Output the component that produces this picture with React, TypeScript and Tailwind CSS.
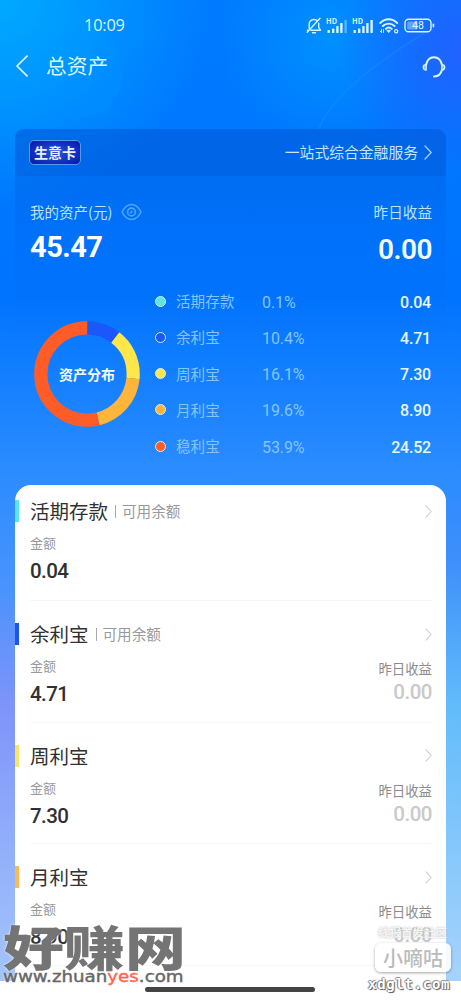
const shares = [
  { name: "活期存款", percent: 0.1, amount: "0.04", color: "#5ce6e0" },
  { name: "余利宝", percent: 10.4, amount: "4.71", color: "#1b57fa" },
  { name: "周利宝", percent: 16.1, amount: "7.30", color: "#ffe64a" },
  { name: "月利宝", percent: 19.6, amount: "8.90", color: "#ffb43a" },
  { name: "稳利宝", percent: 53.9, amount: "24.52", color: "#ff5c28" },
];

const products = [
  { name: "活期存款", note: "可用余额", amount: "0.04", income: null, color: "#5ce6ec" },
  { name: "余利宝", note: "可用余额", amount: "4.71", income: "0.00", color: "#1b55f0" },
  { name: "周利宝", note: null, amount: "7.30", income: "0.00", color: "#f9e668" },
  { name: "月利宝", note: null, amount: "8.90", income: "0.00", color: "#f9b955" },
];

function Chevron({ className }: { className: string }) {
  return (
    <svg className={className} viewBox="0 0 8 15" fill="none" stroke="currentColor" strokeWidth="1.2" strokeLinecap="round" strokeLinejoin="round">
      <path d="m1 1 6.2 6.5L1 14" />
    </svg>
  );
}

function Signal({ last }: { last: string }) {
  return (
    <svg width="22" height="18" viewBox="0 0 22 18" fill="#d8f6ff">
      <text x="0" y="6.5" fontSize="7" fontWeight="700" textLength="11" lengthAdjust="spacingAndGlyphs">HD</text>
      <rect x="1.5" y="13" width="2.4" height="3" rx="0.6" />
      <rect x="6" y="11.5" width="2.4" height="4.5" rx="0.6" />
      <rect x="10.2" y="9" width="2.4" height="7" rx="0.6" />
      <rect x="14.2" y="6" width="2.4" height="10" rx="0.6" />
      <rect x="18.4" y="3" width="2.4" height="13" rx="0.6" opacity={last} />
    </svg>
  );
}

function StatusBar() {
  return (
    <div className="flex h-[50px] items-center pt-[1px] pr-[26px] pl-[84px] text-[#d8f6ff]">
      <span className="font-['Open_Sans'] text-[16.4px] font-medium tracking-[-0.2px]">10:09</span>
      <div className="ml-auto flex items-center">
        <svg width="16" height="17" viewBox="0 0 16 17" fill="none" stroke="currentColor" strokeWidth="1.4" strokeLinecap="round" strokeLinejoin="round">
          <path d="M3.2 11.2V7.2C3.2 4.4 5.2 2.5 8 2.5c1.4 0 2.6.5 3.4 1.3M12.7 6.2v4.2l1.8 2.8H4.8" />
          <path d="M14 1.2 1.2 15.2M1.5 13.2h1M6.5 15.8h3" />
        </svg>
        <div className="ml-[4px] flex gap-[4px]">
          <Signal last="0.4" />
          <Signal last="1" />
        </div>
        <svg className="ml-[5px]" width="20" height="17" viewBox="0 0 20 17" fill="none" stroke="currentColor" strokeWidth="1.8" strokeLinecap="round">
          <path d="M1.2 6C6.2 1 13.2 1 18.2 6M3.8 9c3.4-3.3 8.4-3.3 11.8 0M6.8 11.8c1.8-1.6 4.2-1.6 6 0" />
          <path d="m8 13.6 1.7 2 1.7-2z" fill="currentColor" strokeWidth="0.8" />
          <path d="M2.5 12.5v3M1.3 14.3l1.2 1.2M4.5 15.5v-3" strokeWidth="0.9" />
          <circle cx="17.2" cy="14.2" r="1.6" strokeWidth="1.2" />
        </svg>
        <svg className="ml-[5px]" width="31" height="15" viewBox="0 0 31 15" fill="none">
          <rect x="1" y="1.2" width="26" height="12.6" rx="3.6" stroke="#d8f6ff" strokeWidth="1.4" />
          <rect x="3.2" y="3.4" width="10.5" height="8.2" rx="1.5" fill="#d8f6ff" opacity="0.4" />
          <rect x="28.6" y="5.4" width="1.6" height="4.2" rx="0.8" fill="#d8f6ff" />
          <text x="14" y="11.2" textAnchor="middle" fill="#e3f8ff" fontSize="10.5" fontFamily="Roboto">48</text>
        </svg>
      </div>
    </div>
  );
}

function Header() {
  return (
    <header className="flex h-[32px] items-center pr-[15px] pl-[15px] text-[#dcf8ff]">
      <svg width="14" height="22" viewBox="0 0 14 22" fill="none" stroke="currentColor" strokeWidth="1.7" strokeLinecap="round" strokeLinejoin="round">
        <path d="M12 1.2 2 11l10 9.8" />
      </svg>
      <h1 className="-mt-[2px] ml-[17px] text-[20.7px] leading-[30px]">总资产</h1>
      <svg className="mt-[2px] ml-auto" width="24" height="24" viewBox="0 0 24 24" fill="none" stroke="currentColor" strokeWidth="2" strokeLinecap="round">
        <path d="M4 10C5 5 8 2.2 12 2.2S19 5 20 10M20 14.8c-1 4-3.6 6.6-8 6.8" />
        <path d="M4.2 9.5v5.6C2.3 15.1 1.2 14 1.2 12.3s1.1-2.8 3-2.8ZM19.8 9.5v5.6c1.9 0 3-1.1 3-2.8s-1.1-2.8-3-2.8Z" fill="currentColor" fillOpacity="0.6" strokeWidth="1.2" />
      </svg>
    </header>
  );
}

function Donut() {
  let start = 0;
  return (
    <div className="relative h-[106px] w-[106px]">
      <svg width="106" height="106" viewBox="0 0 106 106" fill="none">
        <g transform="rotate(-90 53 53)">
          {shares.map((s) => {
            const offset = start;
            start += s.percent;
            return (
              <circle key={s.name} cx="53" cy="53" r="46.2" stroke={s.color} strokeWidth="13.2" pathLength="100.1" strokeDasharray={`${s.percent} 100.1`} strokeDashoffset={-offset} />
            );
          })}
        </g>
      </svg>
      <span className="absolute inset-0 flex items-center justify-center text-[14px] font-bold text-[#f0fbff]">资产分布</span>
    </div>
  );
}

function Summary() {
  return (
    <section className="mx-[15px] mt-[47px] h-[356px] rounded-t-[9px] bg-linear-to-b from-[#005ad8]/35 from-13% via-[#0064e8]/25 via-30% to-transparent to-60%">
      <div className="flex h-[47px] items-center rounded-t-[9px] bg-[#0058d8]/35 pr-[14px] pl-[14px]">
        <span className="flex h-[25px] w-[52px] items-center justify-center rounded-[5px] border-[1.5px] border-[#4e9cf5] bg-radial from-[#2a50dc] to-[#0a12ac] text-[14px] font-bold text-[#e6efff]">生意卡</span>
        <span className="ml-auto text-[14.8px] text-[#c2e6ff]">一站式综合金融服务</span>
        <Chevron className="ml-[6px] h-[15px] w-[8px] text-[#a9d3ff]" />
      </div>
      <div className="flex justify-between pt-[25px] pr-[14px] pl-[15px]">
        <div>
          <div className="flex h-[22px] items-center text-[14.5px] text-[#b8e4ff]">
            我的资产(元)
            <svg className="ml-[9px]" width="21" height="18" viewBox="0 0 21 18" fill="none" stroke="#4ea4ff" strokeWidth="1.6">
              <path d="M1 9C6-1 15-1 20 9 15 19 6 19 1 9Z" strokeLinejoin="round" />
              <circle cx="10.5" cy="9" r="3.9" />
              <path d="m9.2 10.3 2.2-2.2" />
            </svg>
          </div>
          <p className="mt-[7px] font-['Roboto'] text-[29px] leading-[34px] font-bold tracking-[-0.5px] text-white">45.47</p>
        </div>
        <div className="text-right">
          <div className="h-[22px] text-[14.6px] leading-[22px] text-[#b8e4ff]">昨日收益</div>
          <p className="mt-[10px] font-['Roboto'] text-[28px] leading-[34px] font-semibold tracking-[-0.5px] text-[#effcff]">0.00</p>
        </div>
      </div>
      <div className="flex pt-[16px] pr-[15px] pl-[19px]">
        <div className="pt-[38px]"><Donut /></div>
        <ul className="ml-[15px] flex-1">
          {shares.map((s) => (
            <li key={s.name} className="flex h-[36.25px] items-center text-[14.6px] text-[#84c4ff]">
              <i className="h-[11px] w-[11px] rounded-full border-[1.5px] border-[#d5edff]" style={{ backgroundColor: s.color }} />
              <span className="ml-[10px] w-[86px]">{s.name}</span>
              <span className="pt-[3px] font-['Roboto'] text-[16px] tracking-[-0.1px]">{s.percent}%</span>
              <span className="ml-auto pt-[3px] font-['Roboto'] text-[16px] font-medium tracking-[-0.2px] text-[#e5f8ff]">{s.amount}</span>
            </li>
          ))}
        </ul>
      </div>
    </section>
  );
}

function ProductList() {
  return (
    <section className="mx-[15px] h-[496px] overflow-hidden rounded-t-[16px] bg-white pt-[10px]">
      {products.map((p, i) => (
        <div key={p.name} className={i === 0 ? "h-[106px]" : "h-[121.5px] pt-[17px]"}>
          <div className="flex h-[32px] items-center pr-[14px]">
            <i className="h-[22px] w-[4px]" style={{ backgroundColor: p.color }} />
            <h2 className="ml-[11px] text-[19.5px] leading-[30px] text-[#303030]">{p.name}</h2>
            {p.note && (
              <>
                <i className="ml-[7px] h-[13px] w-px bg-[#aaa]" />
                <span className="ml-[6px] text-[14.6px] text-[#999]">{p.note}</span>
              </>
            )}
            <Chevron className="ml-auto h-[13px] w-[7px] text-[#ccc]" />
          </div>
          <div className="mr-[14px] ml-[15px] flex justify-between border-b border-[#f7f7f7]">
            <div className={i === 0 ? "h-[73px]" : "h-[71.5px]"}>
              <div className="mt-[6px] text-[13px] leading-[20px] text-[#999]">金额</div>
              <p className="mt-[5px] font-['Roboto'] text-[20.5px] leading-[26px] font-medium tracking-[-0.6px] text-[#303030]">{p.amount}</p>
            </div>
            {p.income && (
              <div className="text-right">
                <div className="mt-[8px] text-[13.4px] leading-[20px] text-[#8c8c8c]">昨日收益</div>
                <p className="mt-px font-['Roboto'] text-[20.5px] leading-[26px] font-medium tracking-[-0.5px] text-[#c9c9c9]">{p.income}</p>
              </div>
            )}
          </div>
        </div>
      ))}
    </section>
  );
}

function Watermarks() {
  return (
    <>
      <div className="absolute top-[918px] left-[3px] origin-top-left scale-x-[1.27] text-[48px] leading-[54px] font-black whitespace-nowrap text-[#5c5c5c]/85 [text-shadow:0_0_2px_#fff]">好赚网</div>
      <div className="absolute top-[967px] left-[3px] origin-top-left scale-x-[1.14] font-['DejaVu_Sans'] text-[16px] leading-[20px] whitespace-nowrap text-[#666] [-webkit-text-stroke:0.4px] [text-shadow:0_0_2px_#fff]">
        www.zhuan<span className="text-[#ff654b]">yes</span>.com
      </div>
      <div className="absolute top-[924px] left-[378px] text-[11.5px] leading-[16px] font-bold whitespace-nowrap text-white/85 [text-shadow:0_0_2px_#aaa]">线报首发社区</div>
      <div className="absolute top-[943px] left-[375px] flex h-[29px] w-[76px] items-center justify-center rounded-[6px] bg-white/90 text-[20px] font-medium text-[#bbb] shadow-[0_1px_3px_rgba(0,0,0,0.35)]">小嘀咕</div>
      <div className="absolute top-[974px] left-[368px] font-['DejaVu_Sans_Mono'] text-[14px] leading-[20px] font-bold tracking-[0.7px] whitespace-nowrap text-white [text-shadow:1px_1px_1px_#555,-1px_0_1px_#777,0_-1px_1px_#888]">xdglt.com</div>
    </>
  );
}

export default function App() {
  return (
    <div className="relative isolate h-[1000px] w-[461px] overflow-hidden bg-white font-['Noto_Sans_CJK_SC',sans-serif]">
      <svg className="absolute inset-0 -z-10" width="461" height="981" viewBox="0 0 461 981">
        <defs>
          <linearGradient id="left" x2="0" y2="1">
            <stop offset="0" stopColor="#007bff" />
            <stop offset="0.3" stopColor="#0074ff" />
            <stop offset="0.48" stopColor="#2b8cff" />
            <stop offset="0.6" stopColor="#4a93fc" />
            <stop offset="0.72" stopColor="#7f94f9" />
            <stop offset="0.86" stopColor="#91aefa" />
            <stop offset="1" stopColor="#a4c4fb" />
          </linearGradient>
          {/* user space so the stops line up with the left gradient */}
          <linearGradient id="right" gradientUnits="userSpaceOnUse" x1="0" y1="0" x2="0" y2="981">
            <stop offset="0.48" stopColor="#2b8cff" />
            <stop offset="0.57" stopColor="#3e8ffa" />
            <stop offset="0.72" stopColor="#62bcfa" />
            <stop offset="0.86" stopColor="#85c7fb" />
            <stop offset="1" stopColor="#a6d3fb" />
          </linearGradient>
          <radialGradient id="glow" gradientUnits="userSpaceOnUse" cx="0" cy="0" r="210">
            <stop offset="0" stopColor="#00aaff" />
            <stop offset="1" stopColor="#00aaff" stopOpacity="0" />
          </radialGradient>
          <radialGradient id="middle" gradientUnits="userSpaceOnUse" cx="330" cy="40" r="110">
            <stop offset="0" stopColor="#0094ff" stopOpacity="0.85" />
            <stop offset="1" stopColor="#0094ff" stopOpacity="0" />
          </radialGradient>
          <radialGradient id="corner" gradientUnits="userSpaceOnUse" cx="461" cy="50" r="125">
            <stop offset="0" stopColor="#2262ff" />
            <stop offset="1" stopColor="#2262ff" stopOpacity="0" />
          </radialGradient>
        </defs>
        <rect width="461" height="981" fill="url(#left)" />
        <rect x="230" y="471" width="231" height="510" fill="url(#right)" />
        <rect width="230" height="220" fill="url(#glow)" />
        <rect x="210" width="251" height="160" fill="url(#middle)" />
        <rect x="330" width="131" height="185" fill="url(#corner)" />
        <path d="M0 0h70c14 20 43 31 52 59 5 19-3 38-16 55L0 130Z" fill="#00a5ff" opacity="0.1" />
        <path d="M426 32c-36 22-93 60-107 97" fill="none" stroke="#2ea0ff" opacity="0.35" />
      </svg>
      <StatusBar />
      <Header />
      <Summary />
      <ProductList />
      <div className="absolute top-[987px] left-[145px] h-[5px] w-[170px] rounded-full bg-[#444]" />
      <Watermarks />
    </div>
  );
}
